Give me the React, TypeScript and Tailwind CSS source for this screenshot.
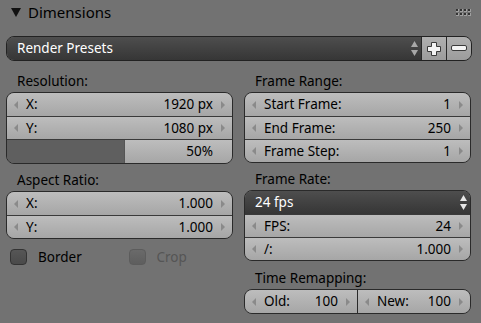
import React from 'react'

const font = { fontFamily: '"Noto Sans", "Open Sans", sans-serif' }

function ArrowL() {
  return (
    <svg width="4" height="8" viewBox="0 0 4 8" className="shrink-0">
      <polygon points="4,0 4,8 0,4" fill="#8a8a8a" />
    </svg>
  )
}

function ArrowR() {
  return (
    <svg width="4" height="8" viewBox="0 0 4 8" className="shrink-0">
      <polygon points="0,0 0,8 4,4" fill="#8a8a8a" />
    </svg>
  )
}

function UpDown({ color }: { color: string }) {
  return (
    <svg width="7" height="15" viewBox="0 0 7 15" className="shrink-0">
      <polygon points="3.5,0 7,6 0,6" fill={color} />
      <polygon points="0,9 7,9 3.5,15" fill={color} />
    </svg>
  )
}

function NumRow({ label, value, first }: { label: string; value: string; first?: boolean }) {
  return (
    <div
      className={`h-[23px] flex items-center bg-linear-to-b from-[#bdbdbd] to-[#a6a6a6] pl-[7px] pr-[7px] text-[13.5px] text-black ${
        first ? '' : 'border-t border-[#3a3a3a]'
      }`}
    >
      <ArrowL />
      <span className="ml-[8px] flex-1 whitespace-nowrap">{label}</span>
      <span className="mr-[8px] whitespace-nowrap">{value}</span>
      <ArrowR />
    </div>
  )
}

function Box({ children }: { children: React.ReactNode }) {
  return <div className="rounded-[8px] border border-[#2a2a2a] overflow-hidden">{children}</div>
}

function Label({ text, mt }: { text: string; mt: string }) {
  return <div className={`h-[22px] flex items-center pl-[11px] text-[13.5px] text-black ${mt}`}>{text}</div>
}

function Checkbox({ label, disabled }: { label: string; disabled?: boolean }) {
  return (
    <div className="flex items-center">
      <div
        className={`w-[17px] h-[16px] rounded-[4px] border bg-linear-to-b ${
          disabled ? 'border-[#5c5c5c] from-[#6a6a6a] to-[#5e5e5e]' : 'border-[#333] from-[#565656] to-[#4a4a4a]'
        }`}
      />
      <span className={`ml-[11px] text-[13.5px] ${disabled ? 'text-[#555]' : 'text-black'}`}>{label}</span>
    </div>
  )
}

export default function App() {
  return (
    <div className="w-[481px] h-[323px] bg-[#727272] overflow-hidden select-none" style={font}>
      {/* header */}
      <div className="h-[24px] flex items-center pl-[11px] pr-[10px]">
        <svg width="10" height="9" viewBox="0 0 10 9" className="shrink-0">
          <polygon points="0,0 10,0 5,9" fill="#111" />
        </svg>
        <span className="ml-[7px] text-[15px] text-black flex-1">Dimensions</span>
        <div className="grid grid-cols-4 gap-x-[1px] gap-y-[1px] mt-[1px]">
          {Array.from({ length: 8 }).map((_, i) => (
            <div key={i} className="w-[3px] h-[3px] bg-[#333] border-b border-r border-[#a0a0a0]" />
          ))}
        </div>
      </div>

      {/* render presets */}
      <div className="mt-[12px] ml-[6px] mr-[9px] h-[25px] flex rounded-[8px] border border-[#222] overflow-hidden">
        <div className="flex-1 flex items-center bg-linear-to-b from-[#4e4e4e] to-[#363636] pl-[10px] pr-[3px]">
          <span className="flex-1 text-[13.5px] text-white">Render Presets</span>
          <UpDown color="#a8a8a8" />
        </div>
        <div className="w-[25px] flex items-center justify-center border-l border-[#2a2a2a] bg-linear-to-b from-[#b0b0b0] to-[#9c9c9c]">
          <svg width="16" height="16" viewBox="0 0 16 16">
            <path d="M5.5 1.5 h5 v4 h4 v5 h-4 v4 h-5 v-4 h-4 v-5 h4 z" fill="#f4f4f4" stroke="#3a3a3a" strokeWidth="1" />
          </svg>
        </div>
        <div className="w-[25px] flex items-center justify-center border-l border-[#2a2a2a] bg-linear-to-b from-[#b0b0b0] to-[#9c9c9c]">
          <svg width="16" height="7" viewBox="0 0 16 7">
            <rect x="0.5" y="0.5" width="15" height="5" rx="1.5" fill="#f4f4f4" stroke="#3a3a3a" strokeWidth="1" />
          </svg>
        </div>
      </div>

      {/* columns */}
      <div className="grid grid-cols-2 gap-x-[11px] ml-[6px] mr-[10px]">
        <div className="flex flex-col">
          <Label text="Resolution:" mt="mt-[9px]" />
          <Box>
            <NumRow first label="X:" value="1920 px" />
            <NumRow label="Y:" value="1080 px" />
            <div className="h-[24px] flex border-t border-[#3a3a3a] text-[13.5px]">
              <div className="w-[118px] bg-[#5f5f5f] border-r border-[#555]" />
              <div className="flex-1 flex items-center justify-end pr-[19px] bg-linear-to-b from-[#bdbdbd] to-[#a6a6a6]">
                50%
              </div>
            </div>
          </Box>
          <Label text="Aspect Ratio:" mt="mt-[5px]" />
          <Box>
            <NumRow first label="X:" value="1.000" />
            <NumRow label="Y:" value="1.000" />
          </Box>
          <div className="grid grid-cols-2 mt-[8px]">
            <div className="pl-[4px]">
              <Checkbox label="Border" />
            </div>
            <div className="pl-[9px]">
              <Checkbox label="Crop" disabled />
            </div>
          </div>
        </div>

        <div className="flex flex-col">
          <Label text="Frame Range:" mt="mt-[9px]" />
          <Box>
            <NumRow first label="Start Frame:" value="1" />
            <NumRow label="End Frame:" value="250" />
            <NumRow label="Frame Step:" value="1" />
          </Box>
          <Label text="Frame Rate:" mt="mt-[5px]" />
          <Box>
            <div className="h-[23px] flex items-center bg-linear-to-b from-[#4e4e4e] to-[#363636] pl-[10px] pr-[3px]">
              <span className="flex-1 text-[13.5px] text-white">24 fps</span>
              <UpDown color="#e8e8e8" />
            </div>
            <NumRow label="FPS:" value="24" />
            <NumRow label="/:" value="1.000" />
          </Box>
          <Label text="Time Remapping:" mt="mt-[6px]" />
          <div className="flex rounded-[8px] border border-[#2a2a2a] overflow-hidden">
            <div className="flex-1">
              <NumRow first label="Old:" value="100" />
            </div>
            <div className="flex-1 border-l border-[#2a2a2a]">
              <NumRow first label="New:" value="100" />
            </div>
          </div>
        </div>
      </div>
    </div>
  )
}
